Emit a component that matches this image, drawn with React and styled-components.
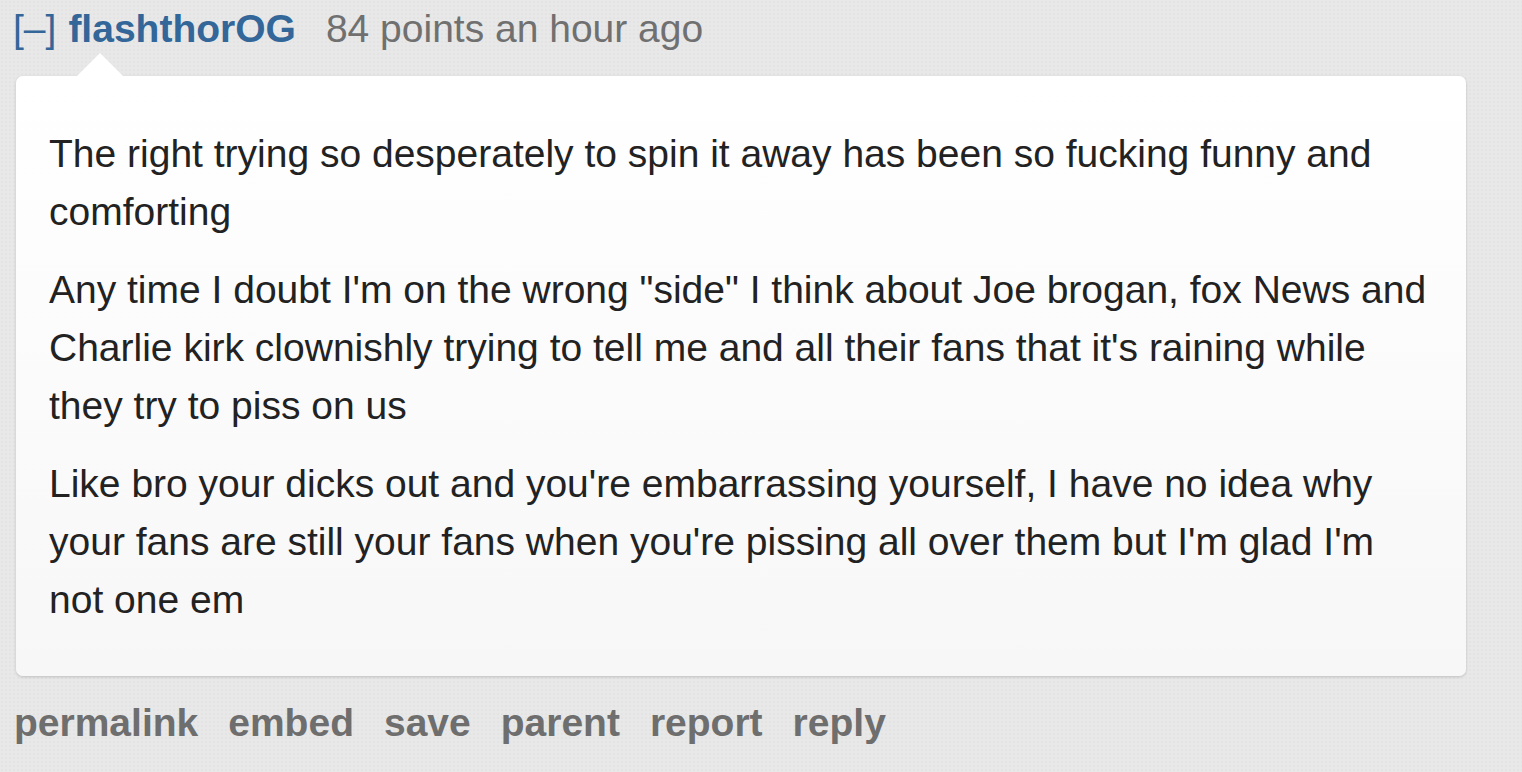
import styled, { createGlobalStyle } from "styled-components";

const GlobalStyle = createGlobalStyle`
  html, body {
    margin: 0;
    padding: 0;
    background: #e8e8e8;
    font-family: "Liberation Sans", Arial, sans-serif;
  }
`;

const Page = styled.div`
  min-height: 772px;
  padding: 6px 56px 0 14px;
  box-sizing: border-box;
  background-color: #e8e8e8;
  background-image: radial-gradient(rgba(0, 0, 0, 0.025) 1px, transparent 1px);
  background-size: 4px 4px;
`;

const Tagline = styled.div`
  display: flex;
  align-items: baseline;
  font-size: 39px;
  line-height: 46px;
  color: #707070;
  white-space: nowrap;
`;

const Expand = styled.span`
  color: #336699;
  margin-right: 12px;
  margin-left: -1px;
`;

const Author = styled.span`
  color: #336699;
  font-weight: bold;
  margin-right: 30px;
`;

const Card = styled.div`
  position: relative;
  margin: 24px 0 0 2px;
  padding: 49px 32px 47px 33px;
  border-radius: 7px;
  background: linear-gradient(#ffffff, #f7f7f7);
  box-shadow: 0 1px 3px rgba(0, 0, 0, 0.18);

  &::before {
    content: "";
    position: absolute;
    left: 61px;
    top: -23px;
    border-left: 23px solid transparent;
    border-right: 23px solid transparent;
    border-bottom: 23px solid #ffffff;
  }
`;

const Para = styled.p`
  margin: 0 0 20px;
  font-size: 39px;
  line-height: 58px;
  color: #222222;

  &:last-child {
    margin-bottom: 0;
  }
`;

const Buttons = styled.ul`
  display: flex;
  gap: 30px;
  list-style: none;
  margin: 24px 0 0;
  padding: 0;
`;

const Button = styled.li`
  font-size: 39px;
  line-height: 46px;
  font-weight: bold;
  color: #6e6e6e;
`;

const paragraphs = [
  "The right trying so desperately to spin it away has been so fucking funny and comforting",
  "Any time I doubt I'm on the wrong \"side\" I think about Joe brogan, fox News and Charlie kirk clownishly trying to tell me and all their fans that it's raining while they try to piss on us",
  "Like bro your dicks out and you're embarrassing yourself, I have no idea why your fans are still your fans when you're pissing all over them but I'm glad I'm not one em",
];

const actions = ["permalink", "embed", "save", "parent", "report", "reply"];

export default function App() {
  return (
    <>
      <GlobalStyle />
      <Page>
        <Tagline>
          <Expand>[–]</Expand>
          <Author>flashthorOG</Author>
          <span>84 points an hour ago</span>
        </Tagline>
        <Card>
          {paragraphs.map((text, i) => (
            <Para key={i}>{text}</Para>
          ))}
        </Card>
        <Buttons>
          {actions.map((a) => (
            <Button key={a}>{a}</Button>
          ))}
        </Buttons>
      </Page>
    </>
  );
}
